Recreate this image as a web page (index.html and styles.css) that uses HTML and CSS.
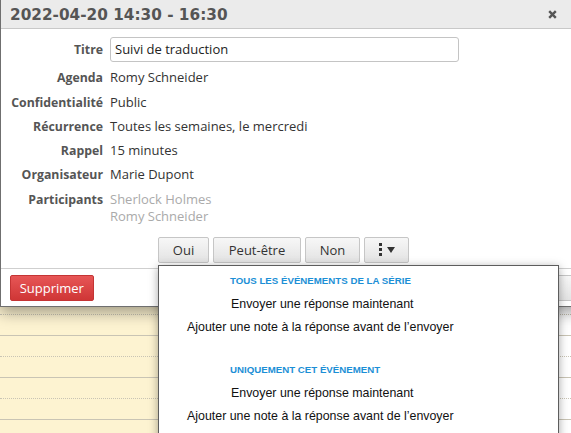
FILE: index.html
```html
<!DOCTYPE html>
<html lang="fr">
<head>
<meta charset="utf-8">
<link rel="stylesheet" href="styles.css">
</head>
<body>
<div class="calendar">
  <div class="cal-col">
    <div class="slot"></div><div class="slot"></div><div class="slot"></div><div class="slot"></div>
    <div class="slot"></div><div class="slot"></div><div class="slot"></div><div class="slot"></div>
    <div class="slot"></div><div class="slot"></div><div class="slot"></div><div class="slot"></div>
    <div class="slot"></div><div class="slot"></div><div class="slot"></div><div class="slot"></div>
    <div class="slot"></div><div class="slot"></div><div class="slot"></div><div class="slot"></div>
    <div class="slot"></div>
  </div>
  <div class="cal-col cal-col-white">
    <div class="slot"></div><div class="slot"></div><div class="slot"></div><div class="slot"></div>
    <div class="slot"></div><div class="slot"></div><div class="slot"></div><div class="slot"></div>
    <div class="slot"></div><div class="slot"></div><div class="slot"></div><div class="slot"></div>
    <div class="slot"></div><div class="slot"></div><div class="slot"></div><div class="slot"></div>
    <div class="slot"></div><div class="slot"></div><div class="slot"></div><div class="slot"></div>
    <div class="slot"></div>
  </div>
</div>

<div class="dialog">
  <div class="dialog-header">
    <span class="dialog-title">2022-04-20 14:30 - 16:30</span>
    <svg class="close" width="9" height="9" viewBox="0 0 9 9"><path d="M1.2 1.2 L7.8 7.8 M7.8 1.2 L1.2 7.8" stroke="#555" stroke-width="2.4" stroke-linecap="butt"/></svg>
  </div>
  <div class="dialog-body">
    <div class="form">
      <div class="label label-input">Titre</div>
      <div class="value"><div class="input">Suivi de traduction</div></div>
      <div class="label">Agenda</div>
      <div class="value">Romy Schneider</div>
      <div class="label">Confidentialité</div>
      <div class="value">Public</div>
      <div class="label">Récurrence</div>
      <div class="value">Toutes les semaines, le mercredi</div>
      <div class="label">Rappel</div>
      <div class="value">15 minutes</div>
      <div class="label">Organisateur</div>
      <div class="value">Marie Dupont</div>
      <div class="label">Participants</div>
      <div class="value muted">Sherlock Holmes<br>Romy Schneider</div>
    </div>
    <div class="answers">
      <button class="btn btn-oui">Oui</button>
      <button class="btn btn-peut">Peut-être</button>
      <button class="btn btn-non">Non</button>
      <button class="btn btn-more"><span class="kebab"><i></i><i></i><i></i></span><span class="caret"></span></button>
    </div>
  </div>
  <div class="dialog-footer">
    <button class="btn-danger">Supprimer</button>
    <button class="btn btn-edit" aria-label="Modifier"></button>
  </div>
</div>

<div class="menu">
  <div class="menu-section">
    <div class="menu-head">TOUS LES ÉVÉNEMENTS DE LA SÉRIE</div>
    <div class="menu-item item-short">Envoyer une réponse maintenant</div>
    <div class="menu-item">Ajouter une note à la réponse avant de l’envoyer</div>
  </div>
  <div class="menu-section section-gap">
    <div class="menu-head">UNIQUEMENT CET ÉVÉNEMENT</div>
    <div class="menu-item item-short">Envoyer une réponse maintenant</div>
    <div class="menu-item">Ajouter une note à la réponse avant de l’envoyer</div>
  </div>
</div>
</body>
</html>
```

FILE: styles.css
```css
* { box-sizing: border-box; }
html, body {
  margin: 0;
  padding: 0;
  width: 571px;
  height: 433px;
  overflow: hidden;
  background: #fff;
  font-family: "Open Sans", "Liberation Sans", sans-serif;
}

/* calendar behind */
.calendar {
  display: flex;
  height: 433px;
}
.cal-col {
  width: 556px;
  background: #fdf3d1;
  display: flex;
  flex-direction: column;
}
.cal-col-white {
  width: 15px;
  background: #fff;
}
.slot {
  height: 21px;
  flex: none;
  border-bottom: 1px dotted #c9c4b4;
}
.slot:nth-child(even) {
  border-bottom: 1px solid #c9c4b4;
}

/* dialog overlay */
.dialog {
  position: absolute;
  left: 0;
  top: 0;
  width: 620px;
  background: #fff;
  border-left: 1px solid #6f6f6f;
  border-bottom: 1px solid #6f6f6f;
  box-shadow: 0 6px 14px rgba(0, 0, 0, 0.35);
}
.dialog-header {
  height: 29px;
  background: #ebebeb;
  border-bottom: 1px solid #c8c8c8;
  display: flex;
  align-items: center;
  justify-content: space-between;
  padding: 0 63px 0 9px;
}
.dialog-title {
  font-family: "DejaVu Sans", "Open Sans", sans-serif;
  font-weight: 700;
  font-size: 15.3px;
  color: #555;
  margin-top: 1px;
}
.close { display: block; margin-top: 1px; }

.dialog-body {
  padding-top: 8px;
}
.form {
  display: grid;
  grid-template-columns: 102px 1fr;
  column-gap: 7px;
  row-gap: 7.25px;
  font-size: 13px;
  line-height: 17px;
}
.label {
  text-align: right;
  font-weight: 700;
  font-size: 12.3px;
  color: #555;
}
.label-input {
  align-self: center;
}
.value { color: #333; }
.muted { color: #aaa; }
.input {
  width: 349px;
  height: 25px;
  border: 1px solid #c4c4c4;
  border-radius: 3px;
  padding: 3px 4px;
  color: #222;
}

.answers {
  display: flex;
  gap: 4px;
  padding: 12px 0 5px 157px;
}
.btn {
  height: 26px;
  font-family: inherit;
  font-size: 13px;
  color: #333;
  border: 1px solid #c6c6c6;
  border-radius: 2px;
  background: linear-gradient(#f7f7f7, #e3e3e3);
  padding: 0;
  display: flex;
  align-items: center;
  justify-content: center;
}
.btn-oui { width: 51px; }
.btn-peut { width: 88px; }
.btn-non { width: 55px; }
.btn-more { width: 45px; gap: 5px; }
.kebab {
  display: flex;
  flex-direction: column;
  gap: 2px;
}
.kebab i {
  display: block;
  width: 3px;
  height: 3px;
  background: #333;
}
.caret {
  width: 0;
  height: 0;
  border-left: 4px solid transparent;
  border-right: 4px solid transparent;
  border-top: 6px solid #333;
  margin-top: 1px;
}

.dialog-footer {
  border-top: 1px solid #cfcfcf;
  display: flex;
  align-items: center;
  padding: 6px 0 5px 9px;
  gap: 456px;
}
.btn-danger {
  width: 95px;
  height: 26px;
  font-family: inherit;
  font-size: 13px;
  color: #fff;
  border: 1px solid #c43434;
  border-radius: 2px;
  background: linear-gradient(#e75656, #cf3636);
  padding: 0;
}
.btn-edit { width: 80px; }

/* dropdown menu */
.menu {
  position: absolute;
  left: 158px;
  top: 265px;
  width: 401px;
  height: 190px;
  background: #fff;
  border: 1px solid #5d5d5d;
  box-shadow: 0 2px 9px rgba(0, 0, 0, 0.35);
  padding-top: 7px;
  font-family: "Liberation Sans", Arial, sans-serif;
}
.section-gap { margin-top: 23px; }
.menu-head {
  font-size: 9.7px;
  font-weight: 700;
  color: #1c8fd6;
  line-height: 16px;
  padding: 0 0 4px 71px;
}
.menu-item {
  font-size: 12.4px;
  line-height: 23px;
  color: #111;
  padding-left: 28px;
}
.menu-item.item-short { padding-left: 72px; }
```
